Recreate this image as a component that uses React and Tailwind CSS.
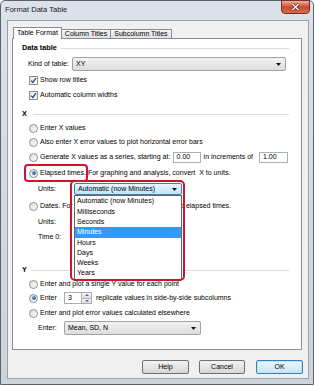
import React from "react";

function Radio({ checked }) {
  return (
    <span className="flex h-[9px] w-[9px] shrink-0 items-center justify-center rounded-full border border-[#8e8f8f] bg-linear-to-br from-[#dcdcdc] to-white">
      {checked && <span className="h-[4px] w-[4px] rounded-full bg-linear-to-br from-[#6fb2e8] to-[#1c4f8e]" />}
    </span>
  );
}

function Check() {
  return (
    <span className="flex h-[9px] w-[9px] shrink-0 items-center justify-center border border-[#8e8f8f] bg-linear-to-br from-[#e4e4e4] to-white">
      <svg width="7" height="7" viewBox="0 0 7 7">
        <polyline points="1,3.6 2.8,5.4 6,1.2" fill="none" stroke="#28497f" strokeWidth="1.3" />
      </svg>
    </span>
  );
}

function Arrow() {
  return (
    <svg width="5" height="3" viewBox="0 0 5 3" className="shrink-0">
      <polygon points="0,0 5,0 2.5,3" fill="#111" />
    </svg>
  );
}

function Combo({ value, className }) {
  return (
    <div className={"flex items-center justify-between rounded-[2px] border border-[#a3a3a3] bg-linear-to-b from-[#f3f3f3] to-[#dcdcdc] pl-[3px] pr-[4px] " + className}>
      <span>{value}</span>
      <Arrow />
    </div>
  );
}

function Header({ label, lineStart }) {
  return (
    <div className="flex h-[14px] shrink-0 items-center pl-[9px] pr-[12px]">
      <span className={"font-bold text-[7.3px] " + lineStart}>{label}</span>
      <span className="h-px flex-1 bg-[#d5dbe0]" />
    </div>
  );
}

function Row({ h, children, pl = "pl-[16px]" }) {
  return <div className={"flex shrink-0 items-center gap-[2px] whitespace-nowrap " + h + " " + pl}>{children}</div>;
}

function Field({ value, className }) {
  return (
    <span className={"flex h-[11px] items-center border border-[#abadb3] bg-white pl-[3px] " + className}>{value}</span>
  );
}

function Button({ label, def }) {
  return (
    <div className={"flex h-[14px] items-center justify-center rounded-[2px] border bg-linear-to-b " + (def ? "border-[#3c7fb1] from-[#eaf6fd] to-[#c9e6f8] shadow-[inset_0_0_0_1px_#b8e2fa]" : "border-[#707070] from-[#f2f2f2] to-[#d6d6d6]")}>
      {label}
    </div>
  );
}

const units = ["Automatic (now Minutes)", "Milliseconds", "Seconds", "Minutes", "Hours", "Days", "Weeks", "Years"];

export default function App() {
  return (
    <div className="h-[386px] w-[315px] bg-white font-['Liberation_Sans',Arial,sans-serif] text-[7px] text-black">
      <div className="flex h-[385px] w-[314px] flex-col rounded-t-[5px] border border-[#59636e] bg-linear-to-b from-[#dce2e9] to-[#cdd3da]">
        {/* title bar */}
        <div className="flex h-[19px] shrink-0 justify-between pl-[4px] pr-[3px]">
          <span className="self-center pb-[2px] text-[7.6px] text-[#1a1a1a]">Format Data Table</span>
          <div className="-mt-px flex h-[14px] w-[29px] items-center justify-center rounded-b-[4px] border border-[#7b2c1f] bg-linear-to-b from-[#eab0a2] via-[#c8492f] to-[#d86b50]">
            <svg width="9" height="8" viewBox="0 0 9 8">
              <path d="M1.5 1 L7.5 7 M7.5 1 L1.5 7" stroke="#5a1a10" strokeWidth="2.6" />
              <path d="M1.5 1 L7.5 7 M7.5 1 L1.5 7" stroke="#fff" strokeWidth="1.4" />
            </svg>
          </div>
        </div>

        {/* client area */}
        <div className="mb-[5px] ml-[6px] mr-[4px] flex flex-1 flex-col border border-[#98a2ad] bg-[#f0f0f0]">
          {/* tabs */}
          <div className="mt-[6px] flex h-[11px] shrink-0 items-end pl-[5px]">
            <div className="relative z-10 -mb-px flex h-[12px] items-center border border-b-0 border-[#898c95] bg-white px-[3px]">Table Format</div>
            <div className="flex h-[9px] items-center border border-l-0 border-b-0 border-[#898c95] bg-linear-to-b from-[#f4f4f4] to-[#e0e0e0] px-[3px]">Column Titles</div>
            <div className="flex h-[9px] items-center border border-l-0 border-b-0 border-[#898c95] bg-linear-to-b from-[#f4f4f4] to-[#e0e0e0] px-[3px]">Subcolumn Titles</div>
          </div>

          {/* panel */}
          <div className="ml-[4px] flex h-[312px] w-[290px] shrink-0 flex-col border border-[#898c95] bg-white">
            <div className="mt-[2px]" />
            <Header label="Data table" lineStart="mr-[4px]" />
            <Row h="h-[18px]" pl="pl-[15px]">
              <span className="w-[42px]">Kind of table:</span>
              <Combo value="XY" className="h-[14px] w-[214px]" />
            </Row>
            <Row h="h-[14px]">
              <Check />
              <span>Show row titles</span>
            </Row>
            <Row h="h-[16px]">
              <Check />
              <span>Automatic column widths</span>
            </Row>
            <div className="mt-[4px]" />
            <Header label="X" lineStart="mr-[6px]" />
            <Row h="h-[14px]">
              <Radio />
              <span>Enter X values</span>
            </Row>
            <Row h="h-[14px]">
              <Radio />
              <span>Also enter X error values to plot horizontal error bars</span>
            </Row>
            <Row h="h-[16px]">
              <Radio />
              <span>Generate X values as a series, starting at:</span>
              <Field value="0.00" className="ml-auto w-[28px]" />
              <span className="ml-[1px]">in increments of</span>
              <Field value="1.00" className="ml-[4px] mr-[13px] w-[29px]" />
            </Row>
            <Row h="h-[16px]">
              <span className="relative flex items-center gap-[2px]">
                <Radio checked />
                <span>Elapsed times.</span>
                <span className="absolute -bottom-[4px] -left-[5px] -right-[2px] -top-[4px] rounded-[4px] border-2 border-[#d0142c]" />
              </span>
              <span>For graphing and analysis, convert&nbsp; X to units.</span>
            </Row>
            <Row h="h-[16px]" pl="pl-[25px]">
              <span className="w-[34px]">Units:</span>
              <div className="relative z-20">
                <div className="flex h-[12px] w-[108px] items-center justify-between rounded-[2px] border border-[#3c7fb1] bg-linear-to-b from-[#eaf6fd] to-[#bfe3fb] pl-[3px] pr-[4px]">
                  <span>Automatic (now Minutes)</span>
                  <Arrow />
                </div>
                <div className="absolute left-0 top-full flex w-[108px] flex-col border border-[#646464] bg-white pt-[0.5px]">
                  {units.map((u) => (
                    <span key={u} className={"flex h-[10.3px] items-center pl-[2px] " + (u === "Minutes" ? "bg-[#3399ff] text-white" : "")}>
                      {u}
                    </span>
                  ))}
                </div>
                <span className="absolute -left-[4px] -right-[3px] -top-[3px] h-[101px] rounded-[5px] border-2 border-[#d0142c]" />
              </div>
            </Row>
            <Row h="h-[18px]">
              <Radio />
              <span>Dates. For graphing and analysis, convert X to elapsed times.</span>
            </Row>
            <Row h="h-[14px]" pl="pl-[25px]">
              <span>Units:</span>
            </Row>
            <Row h="h-[16px]" pl="pl-[25px]">
              <span>Time 0:</span>
            </Row>
            <div className="mt-[18px]" />
            <Header label="Y" lineStart="mr-[4px]" />
            <Row h="h-[14px]">
              <Radio />
              <span>Enter and plot a single Y value for each point</span>
            </Row>
            <Row h="h-[14px]">
              <Radio checked />
              <span className="w-[22px]">Enter</span>
              <span className="flex h-[12px] w-[28px] border border-[#abadb3] bg-white">
                <span className="flex flex-1 items-center pl-[3px]">3</span>
                <span className="flex w-[10px] flex-col border-l border-[#b5b5b5]">
                  <span className="flex flex-1 items-center justify-center border-b border-[#b5b5b5] bg-linear-to-b from-[#f4f4f4] to-[#dedede]">
                    <svg width="4" height="2" viewBox="0 0 4 2"><polygon points="0,2 4,2 2,0" fill="#4a6fa5" /></svg>
                  </span>
                  <span className="flex flex-1 items-center justify-center bg-linear-to-b from-[#f4f4f4] to-[#dedede]">
                    <svg width="4" height="2" viewBox="0 0 4 2"><polygon points="0,0 4,0 2,2" fill="#4a6fa5" /></svg>
                  </span>
                </span>
              </span>
              <span className="ml-[2px]">replicate values in side-by-side subcolumns</span>
            </Row>
            <Row h="h-[16px]">
              <Radio />
              <span>Enter and plot error values calculated elsewhere</span>
            </Row>
            <Row h="h-[14px]" pl="pl-[25px]">
              <span className="w-[24px]">Enter:</span>
              <Combo value="Mean, SD, N" className="h-[14px] w-[137px]" />
            </Row>
          </div>

          {/* buttons */}
          <div className="mt-[10px] flex shrink-0 justify-end gap-[10px] pr-[5px]">
            <div className="w-[47px]"><Button label="Help" /></div>
            <div className="w-[46px]"><Button label="Cancel" /></div>
            <div className="ml-px w-[47px]"><Button label="OK" def /></div>
          </div>
        </div>
      </div>
    </div>
  );
}
